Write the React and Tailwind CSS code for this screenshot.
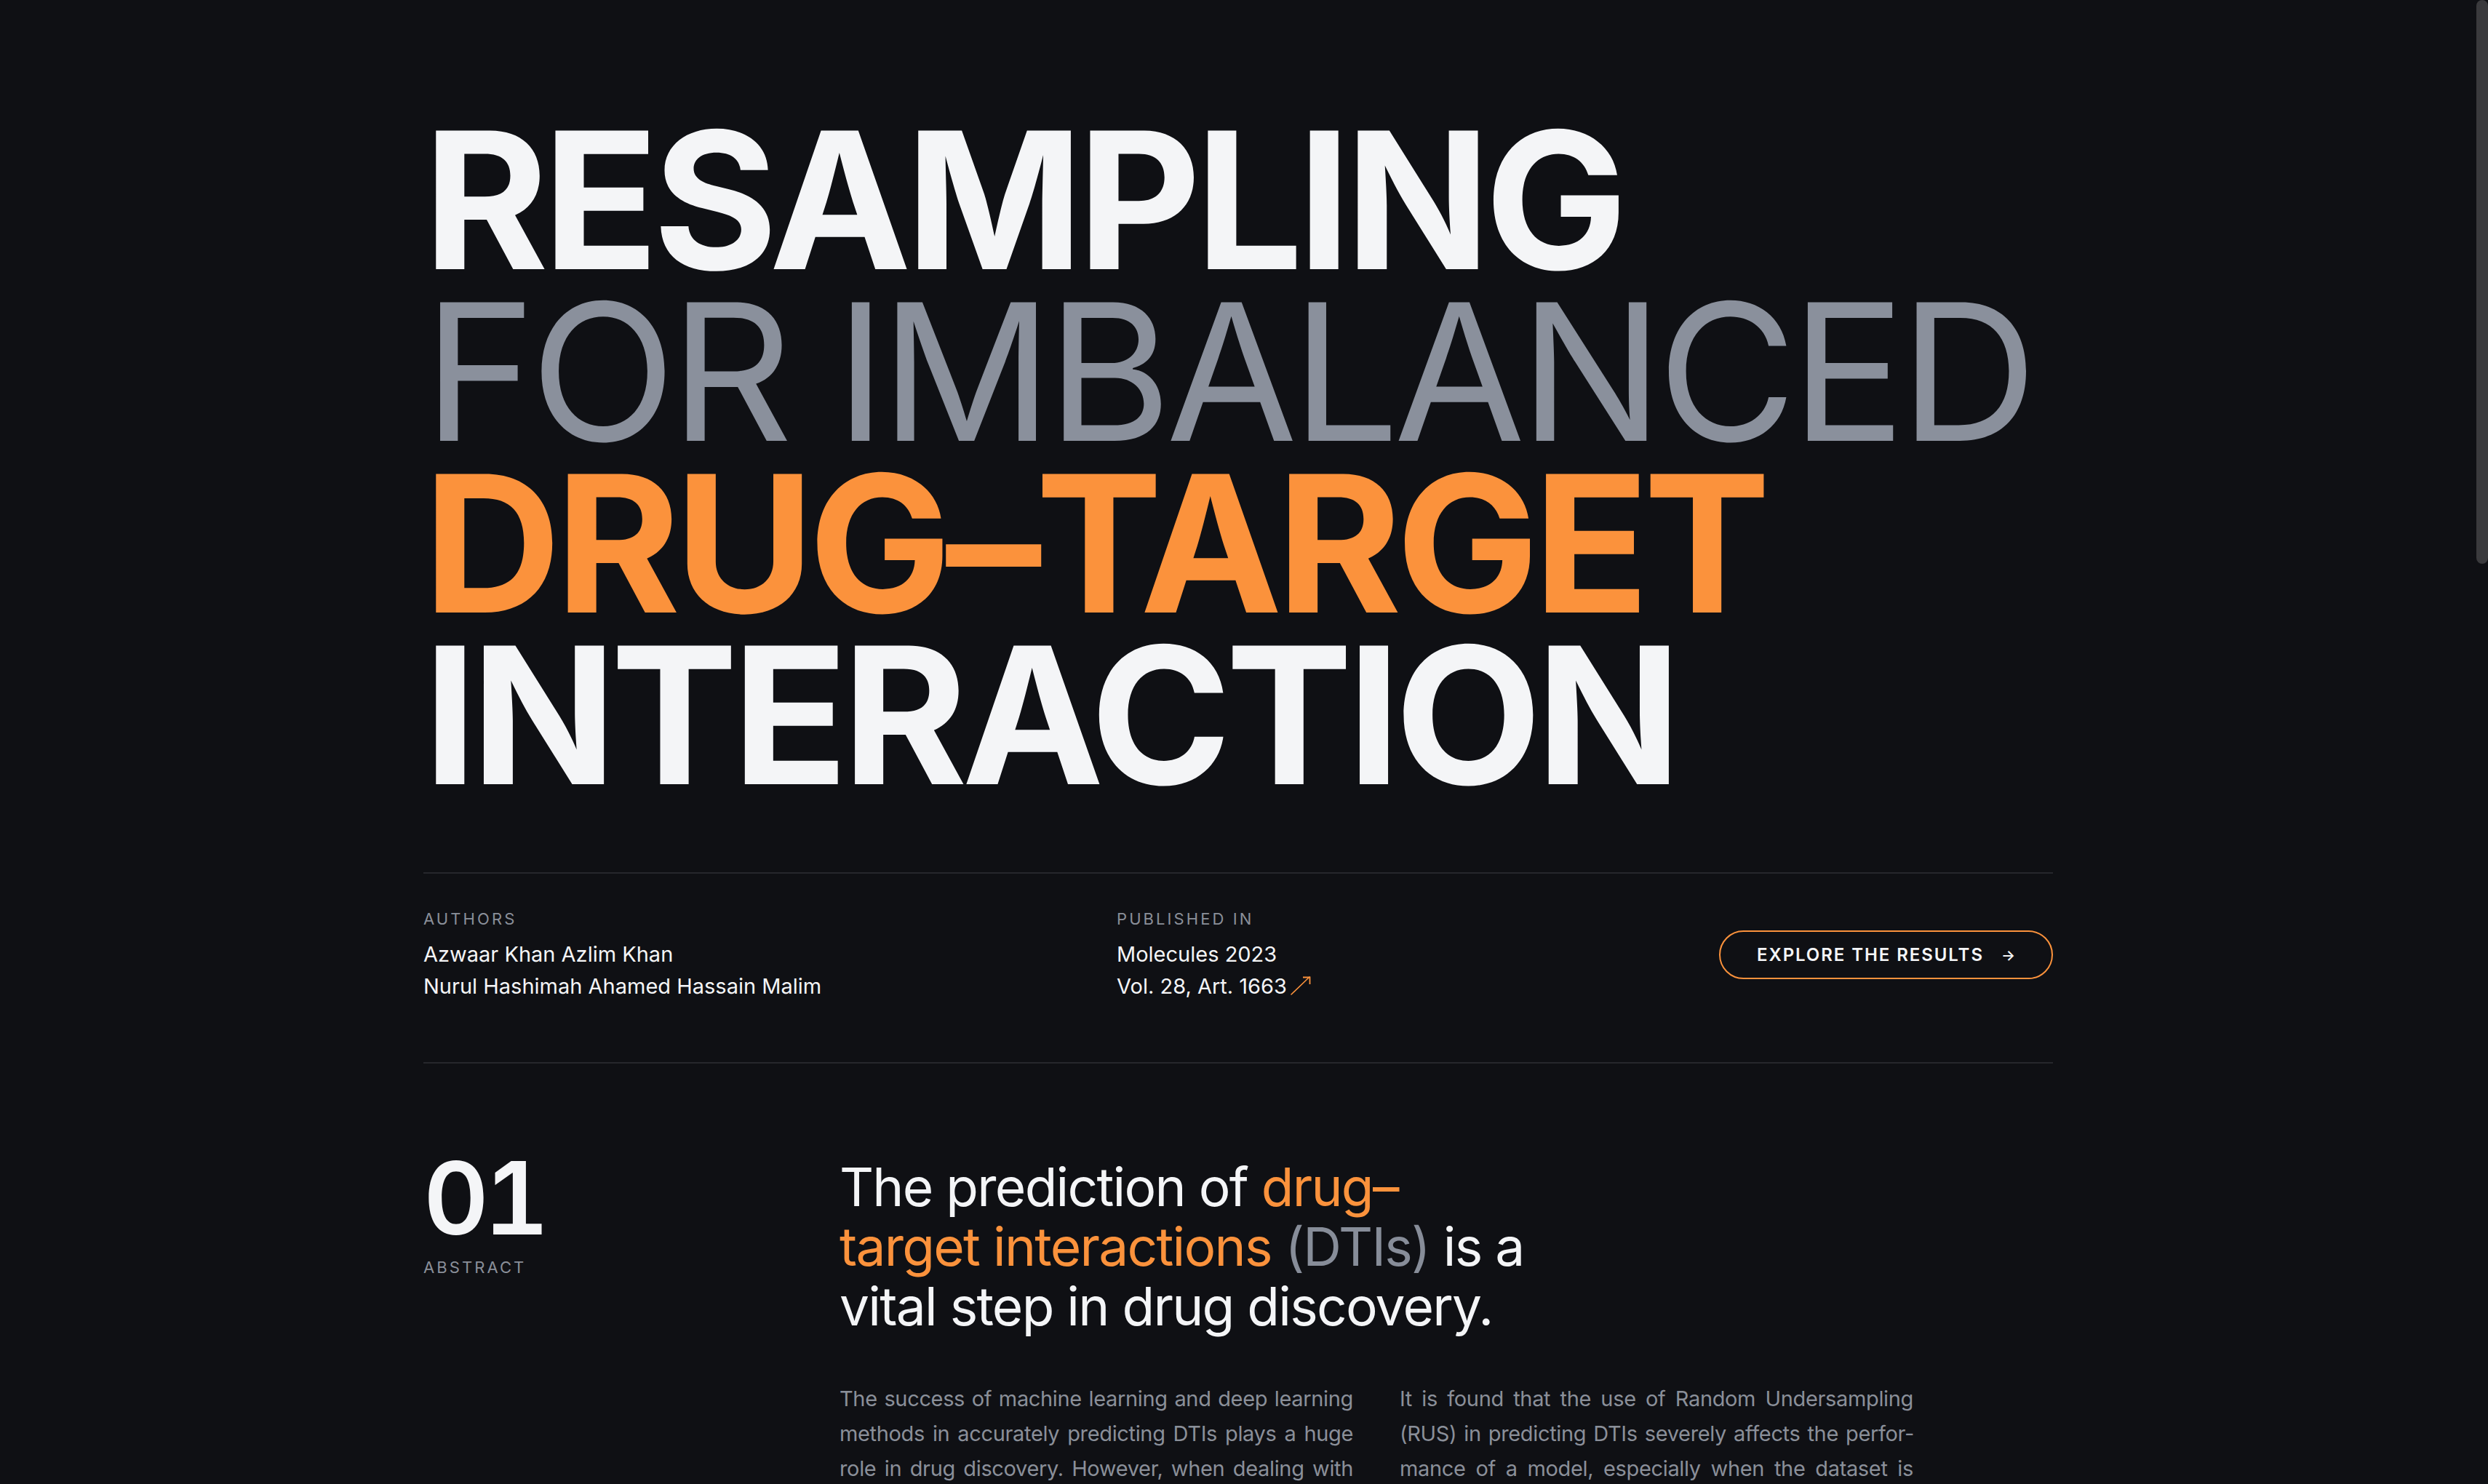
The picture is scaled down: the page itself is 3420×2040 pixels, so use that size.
import React from 'react';

const ORANGE = 'text-[#fb923c]';

function Label({ children, className = '' }) {
  return (
    <div className={`text-[22px] leading-[33px] tracking-[0.14em] uppercase text-[#8a8f99] ${className}`}>
      {children}
    </div>
  );
}

function ExternalArrow() {
  return (
    <svg width="30" height="28" viewBox="0 0 30 28" className="ml-[4px] inline-block align-[-3px]" fill="none">
      <path d="M2 26 L27 2" stroke="#fb923c" strokeWidth="1.6" strokeLinecap="round" />
      <path d="M18 2.5 H27.5 V12" stroke="#fb923c" strokeWidth="1.8" />
    </svg>
  );
}

function MetaRow() {
  return (
    <div className="grid grid-cols-[953px_1fr_auto] items-center pt-[46px] pb-[82px]">
      <div>
        <Label>Authors</Label>
        <div className="mt-[10px] text-[29px] leading-[44px] text-[#f4f5f7]">
          <div>Azwaar Khan Azlim Khan</div>
          <div>Nurul Hashimah Ahamed Hassain Malim</div>
        </div>
      </div>
      <div>
        <Label>Published in</Label>
        <div className="mt-[10px] text-[29px] leading-[44px] text-[#f4f5f7]">
          <div>Molecules 2023</div>
          <div>
            Vol. 28, Art. 1663
            <ExternalArrow />
          </div>
        </div>
      </div>
      <button className="flex h-[67px] items-center gap-[24px] rounded-full border-2 border-[#fb923c] px-[50px] text-[24px] font-semibold uppercase tracking-[0.08em] text-[#f4f5f7]">
        <span>Explore the results</span>
        <span className="text-[20px] tracking-normal">→</span>
      </button>
    </div>
  );
}

function SectionHead({ num, label }) {
  return (
    <div>
      <div className="text-[139px] font-semibold leading-none tracking-[-0.05em] tabular-nums text-[#f4f5f7]">{num}</div>
      <Label className="mt-[10px]">{label}</Label>
    </div>
  );
}

function Heading({ children }) {
  return (
    <h2 className="max-w-[1000px] text-[73px] leading-[82px] tracking-[-0.024em] text-[#f4f5f7]">{children}</h2>
  );
}

function Abstract() {
  return (
    <section className="grid grid-cols-[572px_1fr] pt-[115px] pb-[160px]">
      <SectionHead num="01" label="Abstract" />
      <div className="pt-[14px]">
        <Heading>
          The prediction of <span className={ORANGE}>drug–</span>
          <br />
          <span className={ORANGE}>target interactions</span> <span className="text-[#878d99]">(DTIs)</span> is a
          <br />
          vital step in drug discovery.
        </Heading>
        <div className="mt-[62px] grid w-[1476px] grid-cols-2 gap-[64px] text-justify text-[29px] leading-[48px] tracking-[-0.012em] text-[#8a8f99]">
          <p>
            The success of machine learning and deep learning methods in accurately predicting DTIs plays a huge
            role in drug discovery. However, when dealing with learning algorithms, the datasets used are usually
            highly dimensional and extremely imbalanced. To solve this issue, the dataset must be resampled
            accordingly. In this paper, we have compared several data resampling techniques to overcome class
            imbalance in machine learning methods as well as to study the effectiveness of deep learning methods
            in overcoming class imbalance in DTI prediction in terms of binary classification using ten (10)
            cancer-related activity classes from BindingDB.
          </p>
          <p>
            It is found that the use of Random Undersampling (RUS) in predicting DTIs severely affects the perfor{'\u00AD'}mance
            of a model, especially when the dataset is highly imbalanced, thus, rendering RUS unreliable. It is
            also found that SVM-SMOTE can be used as a go-to resampling method when paired with the Random Forest
            (RF) and Gaussian Naïve Bayes (NB) classifiers, whereby a high F1 score is recorded for all activity
            classes that are severely and moderately imbalanced. Additionally, the deep learning method called
            Multilayer Perceptron (MLP) recorded high F1 scores for all activity classes even when no resampling
            method was applied.
          </p>
        </div>
      </div>
    </section>
  );
}

const METHODS = [
  ['Random Undersampling', 'RUS', 'Drops majority samples at random until both classes are equal in size.'],
  ['Random Oversampling', 'ROS', 'Duplicates minority samples at random to balance the class ratio.'],
  ['SMOTE', 'SMOTE', 'Synthesises new minority samples between nearest neighbours.'],
  ['SVM-SMOTE', 'SVM-SMOTE', 'Generates synthetic samples near the support-vector borderline.'],
];

function Methods() {
  return (
    <section className="grid grid-cols-[572px_1fr] border-t-2 border-[#26272c] pt-[115px] pb-[160px]">
      <SectionHead num="02" label="Methods" />
      <div className="pt-[14px]">
        <Heading>
          Four resampling strategies, <span className={ORANGE}>ten activity classes</span> from BindingDB.
        </Heading>
        <div className="mt-[62px] grid w-[1476px] grid-cols-2 gap-[64px]">
          {METHODS.map(([name, abbr, desc]) => (
            <div key={abbr} className="border-t-2 border-[#26272c] pt-[32px]">
              <Label>{abbr}</Label>
              <div className="mt-[10px] text-[36px] leading-[48px] text-[#f4f5f7]">{name}</div>
              <p className="mt-[12px] text-[29px] leading-[48px] text-[#8a8f99]">{desc}</p>
            </div>
          ))}
        </div>
      </div>
    </section>
  );
}

function Findings() {
  return (
    <section className="grid grid-cols-[572px_1fr] border-t-2 border-[#26272c] pt-[115px] pb-[200px]">
      <SectionHead num="03" label="Findings" />
      <div className="pt-[14px]">
        <Heading>
          <span className={ORANGE}>SVM-SMOTE</span> paired with RF and NB is a reliable go-to choice.
        </Heading>
        <p className="mt-[62px] w-[1476px] text-[29px] leading-[48px] text-[#8a8f99]">
          Multilayer Perceptron recorded high F1 scores for every activity class, even without resampling.
        </p>
      </div>
    </section>
  );
}

export default function App() {
  return (
    <div
      lang="en"
      className="min-h-screen bg-[#0f1014] pr-[16px] font-['Inter','Noto_Sans',sans-serif] text-[#f4f5f7] antialiased"
    >
      <main className="mx-auto max-w-[2240px] pt-[157px]">
        <h1 className="text-[262px] font-bold leading-[236px] tracking-[-0.03em]">
          <span className="block text-[#f4f5f7]">RESAMPLING</span>
          <span className="block font-normal text-[#8a909c]">FOR IMBALANCED</span>
          <span className="block text-[#fb923c]">DRUG–TARGET</span>
          <span className="block text-[#f4f5f7]">INTERACTION</span>
        </h1>
        <div className="mt-[98px] border-t-2 border-[#26272c]" />
        <MetaRow />
        <div className="border-t-2 border-[#26272c]" />
        <Abstract />
        <Methods />
        <Findings />
      </main>
      {/* scrollbar thumb */}
      <div className="fixed right-0 top-0 h-[775px] w-[16px] rounded-full bg-[#3a3a3d]" />
    </div>
  );
}
